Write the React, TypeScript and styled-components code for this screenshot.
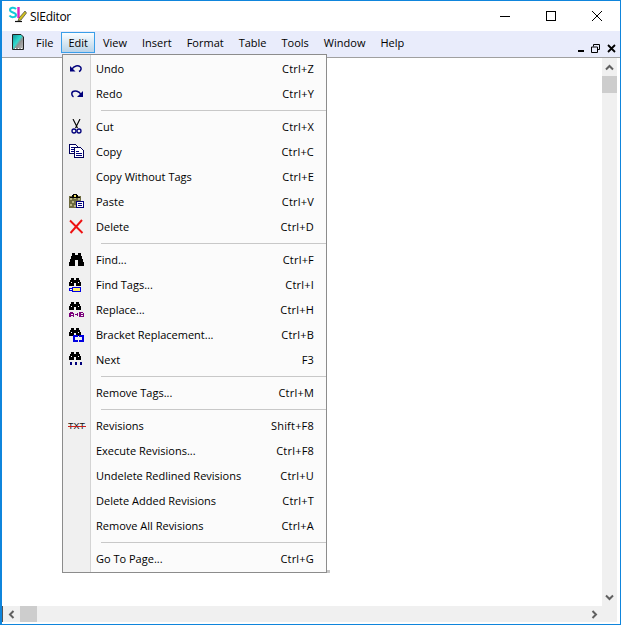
import React from "react";
import styled, { createGlobalStyle } from "styled-components";

const Global = createGlobalStyle`
  html, body { margin: 0; padding: 0; background: #fff; }
  * { box-sizing: border-box; }
  #root { width: 621px; height: 625px; }
`;

const Win = styled.div`
  position: relative;
  width: 621px;
  height: 625px;
  border-style: solid;
  border-color: #0f85dc;
  border-width: 1px 1px 1px 2px;
  background: #fff;
  display: flex;
  flex-direction: column;
  font-family: "Open Sans", "Noto Sans", sans-serif;
  font-size: 11px;
  color: #000;
  overflow: hidden;
`;
const TitleBar = styled.div`
  height: 30px;
  display: flex;
  align-items: center;
  padding-left: 6px;
  background: #fff;
  flex: none;
`;
const Title = styled.div`
  margin-left: 2px;
  font-size: 12px;
  letter-spacing: -0.3px;
  flex: 1;
`;
const Caption = styled.div`
  width: 46px;
  height: 30px;
  display: flex;
  align-items: center;
  justify-content: center;
`;
const MenuBar = styled.div`
  height: 27px;
  flex: none;
  background: #e9ecfb;
  display: flex;
  align-items: flex-start;
  padding: 1px 0 0 6px;
  border-bottom: 1px solid #a0a0a0;
`;
const DocIcon = styled.div`
  width: 20px;
  height: 20px;
  display: flex;
  align-items: center;
  justify-content: center;
  margin-right: 0.5px;
`;
const TopItem = styled.div<{ $active?: boolean }>`
  height: 21px;
  padding: 0 6.5px;
  display: flex;
  align-items: center;
  border: 1px solid ${p => (p.$active ? "#3a9ee8" : "transparent")};
  background: ${p => (p.$active ? "linear-gradient(#fafdff, #b9d3e8)" : "transparent")};
  white-space: nowrap;
`;
const MdiButtons = styled.div`
  margin-left: auto;
  display: flex;
  gap: 7px;
  align-items: center;
  padding: 12px 4px 0 0;
`;
const Body = styled.div`
  flex: 1;
  display: grid;
  grid-template-columns: 1fr 15px;
  grid-template-rows: 1fr 16px;
  padding: 0 3px 2px 0;
  min-height: 0;
`;
const Canvas = styled.div`
  background: #fff;
`;
const VBar = styled.div`
  background: #f0f0f0;
  display: flex;
  flex-direction: column;
  align-items: center;
  justify-content: space-between;
`;
const VThumbWrap = styled.div`
  width: 100%;
  display: flex;
  flex-direction: column;
  align-items: center;
`;
const ArrowCell = styled.div`
  height: 18px;
  width: 100%;
  display: flex;
  align-items: center;
  justify-content: center;
`;
const VThumb = styled.div`
  width: 15px;
  height: 17px;
  background: #cdcdcd;
`;
const HBar = styled.div`
  grid-column: 1 / 3;
  background: #f0f0f0;
  display: flex;
  align-items: center;
  border-left: 1px solid #555;
  padding-right: 15px;
`;
const HArrow = styled.div`
  width: 16px;
  height: 16px;
  display: flex;
  align-items: center;
  justify-content: center;
`;
const HThumb = styled.div`
  width: 17px;
  height: 16px;
  background: #cdcdcd;
  margin: 0 auto 0 1px;
`;
const Menu = styled.div`
  position: absolute;
  left: 60px;
  top: 53px;
  width: 265px;
  height: 519px;
  background: #fbfbfb;
  border: 1px solid #8c8c8c;
  padding: 1px 0;
  display: flex;
  flex-direction: column;
`;
const MenuCorner = styled.div`
  position: absolute;
  left: 325px;
  top: 569px;
  width: 3px;
  height: 3px;
  background: #c8c8c8;
`;
const Gutter = styled.div`
  position: absolute;
  left: 0;
  top: 0;
  bottom: 0;
  width: 28px;
  background: #f0f0f0;
  border-right: 1px solid #d4d4d4;
`;
const Row = styled.div`
  position: relative;
  height: 25px;
  flex: none;
  display: grid;
  grid-template-columns: 33px 1fr auto;
  align-items: center;
  padding-right: 12px;
  white-space: nowrap;
`;
const IconCell = styled.div`
  width: 28px;
  height: 25px;
  display: flex;
  align-items: center;
  justify-content: center;
`;
const Shortcut = styled.span`
  letter-spacing: 0.2px;
`;
const Sep = styled.div`
  position: relative;
  height: 8px;
  flex: none;
  display: flex;
  align-items: center;
  padding-left: 38px;
  &::after {
    content: "";
    flex: 1;
    height: 1px;
    background: #c8c8c8;
  }
`;

const Navy = "#00007b";
const S = ({ children, w = 16, h = 16 }: { children: React.ReactNode; w?: number; h?: number }) => (
  <svg width={w} height={h} viewBox={`0 0 ${w} ${h}`} shapeRendering="crispEdges">{children}</svg>
);
const SmallBinoc = ({ y }: { y: number }) => (
  <g transform={`translate(0 ${y})`}>
    <path fill="#000" d="M2 0h3v2h2V0h3v2h1v2h1v4H7V5H5v3H0V4h1V2h1z" />
    <path fill="#fff" d="M2 4h1v1H2zM9 4h1v1H9z" />
  </g>
);

const icons: Record<string, React.ReactNode> = {
  undo: (
    <svg width="16" height="16" viewBox="1 0 16 16">
      <path fill={Navy} d="M2 5 V10.5 H7.5 Z" />
      <path fill="none" stroke={Navy} strokeWidth="1.5" d="M4 8 C6 4.5 10 4 12.5 6 C13.7 7.5 13 9.5 11 10.5" />
    </svg>
  ),
  redo: (
    <svg width="16" height="16" viewBox="1 0 16 16">
      <path fill={Navy} d="M15 5 V11 H9 Z" />
      <path fill="none" stroke={Navy} strokeWidth="1.5" d="M13 8.5 C11 5 7 4.5 5 5.5 C3.3 6.5 3.3 9.5 5.5 10.8" />
    </svg>
  ),
  cut: (
    <svg width="16" height="16" viewBox="1 0 16 16">
      <path fill="none" stroke="#000" strokeWidth="1.1" d="M5 0 L9.5 9 M12 0 L7.5 9" />
      <circle cx="6" cy="12" r="2" fill="none" stroke={Navy} strokeWidth="1.3" />
      <circle cx="11" cy="12" r="2" fill="none" stroke={Navy} strokeWidth="1.3" />
    </svg>
  ),
  copy: (
    <S>
      <path fill="#fff" stroke="#00005a" d="M.5 .5h6l2 2v7h-8z" />
      <path fill="#fff" stroke="#00005a" d="M5.5 3.5h6l3 3v7h-9z" />
      <path fill={Navy} d="M2 3h3v1H2zM2 5h3v1H2zM2 7h3v1H2zM7 7h3v1H7zM7 9h6v1H7zM7 11h6v1H7z" />
    </S>
  ),
  paste: (
    <S>
      <rect x="0" y="2" width="12" height="12" fill="#6e6b40" />
      <path fill="#b8b482" d="M1 4h2v2H1zM5 3h2v2H5zM9 4h2v2H9zM3 7h2v2H3zM1 10h2v2H1zM5 11h2v2H5z" />
      <path fill="#000" d="M4 0h4v1h1v2h2v1H1V3h2V1h1z" />
      <path fill="#f0e060" d="M5 1h2v2H5z" />
      <path fill="#fff" stroke={Navy} d="M7.5 7.5h7v6h-7z" />
      <path fill={Navy} d="M9 9h4v1H9zM9 11h4v1H9z" />
    </S>
  ),
  del: (
    <svg width="16" height="16" viewBox="0 0 16 16">
      <path d="M1 1.5 L13.5 14 M13 1 L1.5 14" stroke="#ee1111" strokeWidth="1.9" fill="none" />
    </svg>
  ),
  find: (
    <S>
      <path fill="#000" d="M3 1h3v2h3V1h3v3h1v3h1v3h1v4H9V8H6v6H0v-4h1V7h1V4h1z" />
    </S>
  ),
  tags: (
    <S>
      <SmallBinoc y={1} />
      <rect x=".5" y="11.5" width="3" height="2" fill="#fff" stroke="#0000e0" />
      <rect x="3.5" y="10.5" width="8" height="4" fill="#ffee66" stroke="#0000e0" />
    </S>
  ),
  replace: (
    <S>
      <SmallBinoc y={0} />
      <path fill="#7b007b" d="M1 10h3v1h1v4H3.5v-1.5H2V15H0v-4h1zM2 11.5v1h1.5v-1zM6 12h2v-1h1v3H8v-1H6zM10 10h4v1h1v1.5h-1v.5h1v2h-5zM11.5 11v1h2v-1zM11.5 13v1h2v-1z" />
    </S>
  ),
  bracket: (
    <S>
      <SmallBinoc y={1} />
      <path fill="#0000e0" d="M4 8h5v2H6v3h3v2H4zM10 8h5v7h-5v-2h3v-3h-3z" />
    </S>
  ),
  next: (
    <S>
      <SmallBinoc y={0} />
      <path fill={Navy} d="M1 10h2v3H1zM6 10h2v3H6zM11 10h2v3h-2z" />
    </S>
  ),
  rev: (
    <svg width="18" height="16" viewBox="0 0 18 16">
      <text x="0" y="11" fontFamily="'Liberation Sans', sans-serif" fontSize="9.5" fill="#111" textLength="17" lengthAdjust="spacingAndGlyphs">TXT</text>
      <rect x="0" y="8" width="18" height="1" fill="#c82020" />
    </svg>
  ),
};

type It = { l?: string; k?: string; i?: string; sep?: boolean };
const items: It[] = [
  { l: "Undo", k: "Ctrl+Z", i: "undo" },
  { l: "Redo", k: "Ctrl+Y", i: "redo" },
  { sep: true },
  { l: "Cut", k: "Ctrl+X", i: "cut" },
  { l: "Copy", k: "Ctrl+C", i: "copy" },
  { l: "Copy Without Tags", k: "Ctrl+E" },
  { l: "Paste", k: "Ctrl+V", i: "paste" },
  { l: "Delete", k: "Ctrl+D", i: "del" },
  { sep: true },
  { l: "Find...", k: "Ctrl+F", i: "find" },
  { l: "Find Tags...", k: "Ctrl+I", i: "tags" },
  { l: "Replace...", k: "Ctrl+H", i: "replace" },
  { l: "Bracket Replacement...", k: "Ctrl+B", i: "bracket" },
  { l: "Next", k: "F3", i: "next" },
  { sep: true },
  { l: "Remove Tags...", k: "Ctrl+M" },
  { sep: true },
  { l: "Revisions", k: "Shift+F8", i: "rev" },
  { l: "Execute Revisions...", k: "Ctrl+F8" },
  { l: "Undelete Redlined Revisions", k: "Ctrl+U" },
  { l: "Delete Added Revisions", k: "Ctrl+T" },
  { l: "Remove All Revisions", k: "Ctrl+A" },
  { sep: true },
  { l: "Go To Page...", k: "Ctrl+G" },
];

const tops = ["File", "Edit", "View", "Insert", "Format", "Table", "Tools", "Window", "Help"];

const ChevUp = styled.svg<{ $rot: number }>`
  width: 9px;
  height: 9px;
  transform: rotate(${p => p.$rot}deg);
`;
const Chev = ({ r }: { r: number }) => (
  <ChevUp $rot={r} viewBox="0 0 9 9">
    <path d="M1 6.5 L4.5 3 L8 6.5" fill="none" stroke="#606060" strokeWidth="2" />
  </ChevUp>
);

export default function App() {
  return (
    <>
      <Global />
      <Win>
        <TitleBar>
          <svg width="20" height="20" viewBox="0 0 20 20">
            <path d="M8 3 C6 .8 2 1.5 2 4 C2 7 8 6 8 9 C8 11.5 3 12 1.5 9.5" fill="none" stroke="#14c8d8" strokeWidth="2" />
            <path d="M10.5 1 V12" stroke="#e020c0" strokeWidth="2.4" />
            <path d="M17 5 L11 12 L10 15 L13 14 L18.5 7 Z" fill="#d0c020" stroke="#444" strokeWidth=".7" />
            <path d="M7 15.5 H14" stroke="#111" strokeWidth="1.2" />
          </svg>
          <Title>SIEditor</Title>
          <Caption>
            <svg width="10" height="1"><rect width="10" height="1" fill="#000" /></svg>
          </Caption>
          <Caption>
            <svg width="10" height="10"><rect x=".5" y=".5" width="9" height="9" fill="none" stroke="#000" /></svg>
          </Caption>
          <Caption>
            <svg width="10" height="10"><path d="M0 0 L10 10 M10 0 L0 10" stroke="#000" strokeWidth="1" /></svg>
          </Caption>
        </TitleBar>
        <MenuBar>
          <DocIcon>
            <svg width="12" height="16" viewBox="0 0 12 16">
              <defs>
                <linearGradient id="docg" x1="0" y1="0" x2="1" y2="1">
                  <stop offset="0" stopColor="#0f8f98" />
                  <stop offset=".45" stopColor="#30dcd0" />
                  <stop offset=".6" stopColor="#909090" />
                  <stop offset="1" stopColor="#c0c0c0" />
                </linearGradient>
              </defs>
              <path d="M.5 .5 H9 L11.5 3 V15.5 H.5 Z" fill="url(#docg)" stroke="#222" />
              <path d="M3 14h1v1H3zM6 14h1v1H6zM9 14h1v1H9z" fill="#fff" />
            </svg>
          </DocIcon>
          {tops.map(t => (
            <TopItem key={t} $active={t === "Edit"}>{t}</TopItem>
          ))}
          <MdiButtons>
            <svg width="6" height="9"><rect y="6" width="6" height="2" fill="#000" /></svg>
            <svg width="9" height="9" viewBox="0 0 9 9"><path d="M2.5 2.5V.5h6v5h-2M.5 3h6v5.5h-6z" fill="none" stroke="#000" /></svg>
            <svg width="9" height="9" viewBox="0 0 9 9"><path d="M1 1 L8 8 M8 1 L1 8" stroke="#000" strokeWidth="1.8" /></svg>
          </MdiButtons>
        </MenuBar>
        <Body>
          <Canvas />
          <VBar>
            <VThumbWrap>
              <ArrowCell><Chev r={0} /></ArrowCell>
              <VThumb />
            </VThumbWrap>
            <ArrowCell><Chev r={180} /></ArrowCell>
          </VBar>
          <HBar>
            <HArrow><Chev r={-90} /></HArrow>
            <HThumb />
            <HArrow><Chev r={90} /></HArrow>
          </HBar>
        </Body>
        <MenuCorner />
        <Menu>
          <Gutter />
          {items.map((it, n) =>
            it.sep ? (
              <Sep key={n} />
            ) : (
              <Row key={n}>
                <IconCell>{it.i ? icons[it.i] : null}</IconCell>
                <span>{it.l}</span>
                <Shortcut>{it.k}</Shortcut>
              </Row>
            )
          )}
        </Menu>
      </Win>
    </>
  );
}
